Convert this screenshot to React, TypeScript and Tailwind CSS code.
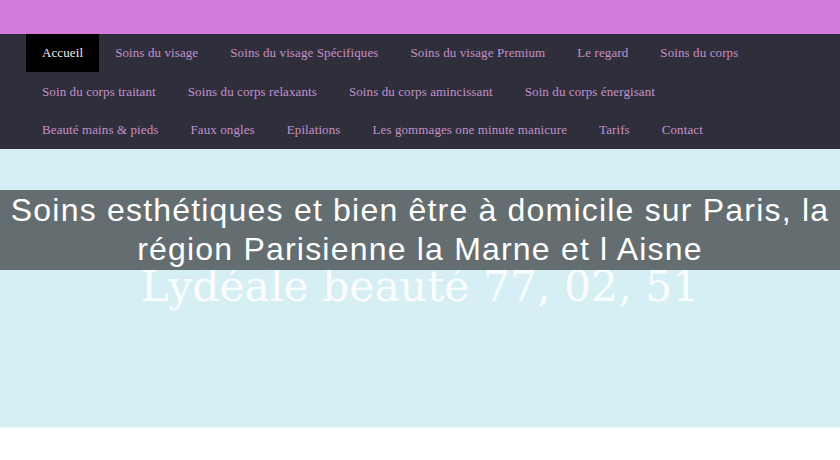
import React from "react";

const rows: string[][] = [
  ["Accueil", "Soins du visage", "Soins du visage Spécifiques", "Soins du visage Premium", "Le regard", "Soins du corps"],
  ["Soin du corps traitant", "Soins du corps relaxants", "Soins du corps amincissant", "Soin du corps énergisant"],
  ["Beauté mains & pieds", "Faux ongles", "Epilations", "Les gommages one minute manicure", "Tarifs", "Contact"],
];

export default function App() {
  return (
    <div className="w-[840px] h-[460px] bg-white overflow-hidden relative">
      <div className="h-[34px] bg-[#d07ad9]" />
      <nav className="bg-[#2e2f3b] pl-[26px] h-[115px] flex flex-col">
        {rows.map((r, i) => (
          <ul key={i} className="flex h-[38.5px]">
            {r.map((t) => (
              <li
                key={t}
                className={
                  "px-[16px] flex items-center text-[13px] tracking-[0.1px] font-['Liberation_Serif',serif] " +
                  (t === "Accueil" ? "bg-black text-[#f2eef2]" : "text-[#c690ca]")
                }
              >
                {t}
              </li>
            ))}
          </ul>
        ))}
      </nav>
      <div className="h-[279px] bg-[#d6eff4] border-b border-[#e6f6f8] flex flex-col items-center pt-[117px]">
        <div className="text-white text-[42.5px] leading-none font-['DejaVu_Serif',serif] opacity-90">
          Lydéale beauté 77, 02, 51
        </div>
      </div>
      <h1 className="absolute left-0 right-0 top-[190px] h-[80px] bg-[#646e70] text-white text-center font-['Liberation_Sans',Arial,sans-serif] text-[32px] tracking-[1.2px] leading-[39px] pt-[1px]">
        Soins esthétiques et bien être à domicile sur Paris, la région Parisienne la Marne et l Aisne
      </h1>
    </div>
  );
}
